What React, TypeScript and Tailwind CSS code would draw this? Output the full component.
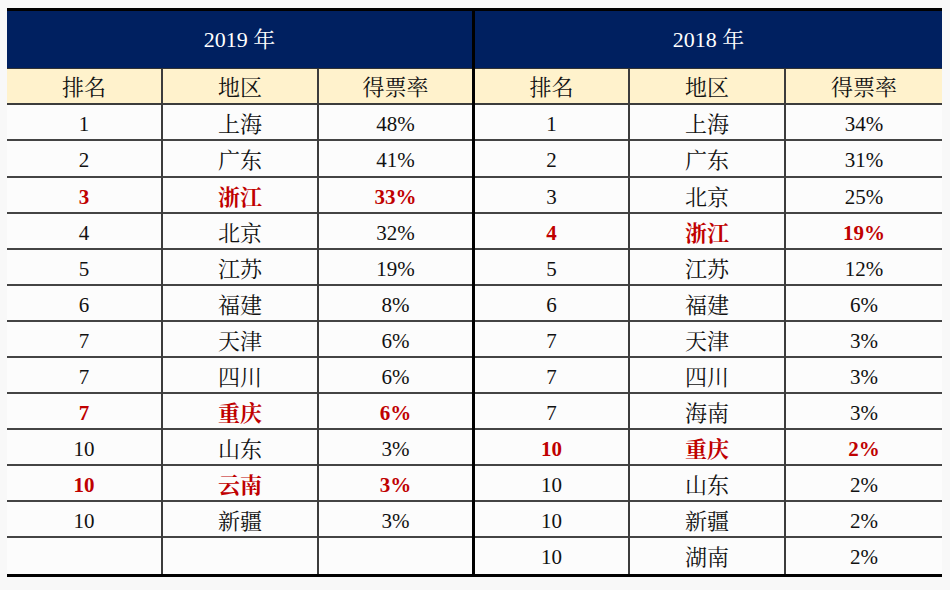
import React from 'react'

type Row = { rank: string; region: string; rate: string; hot?: boolean }

const data2019: Row[] = [
  { rank: '1', region: '上海', rate: '48%' },
  { rank: '2', region: '广东', rate: '41%' },
  { rank: '3', region: '浙江', rate: '33%', hot: true },
  { rank: '4', region: '北京', rate: '32%' },
  { rank: '5', region: '江苏', rate: '19%' },
  { rank: '6', region: '福建', rate: '8%' },
  { rank: '7', region: '天津', rate: '6%' },
  { rank: '7', region: '四川', rate: '6%' },
  { rank: '7', region: '重庆', rate: '6%', hot: true },
  { rank: '10', region: '山东', rate: '3%' },
  { rank: '10', region: '云南', rate: '3%', hot: true },
  { rank: '10', region: '新疆', rate: '3%' },
  { rank: '', region: '', rate: '' },
]

const data2018: Row[] = [
  { rank: '1', region: '上海', rate: '34%' },
  { rank: '2', region: '广东', rate: '31%' },
  { rank: '3', region: '北京', rate: '25%' },
  { rank: '4', region: '浙江', rate: '19%', hot: true },
  { rank: '5', region: '江苏', rate: '12%' },
  { rank: '6', region: '福建', rate: '6%' },
  { rank: '7', region: '天津', rate: '3%' },
  { rank: '7', region: '四川', rate: '3%' },
  { rank: '7', region: '海南', rate: '3%' },
  { rank: '10', region: '重庆', rate: '2%', hot: true },
  { rank: '10', region: '山东', rate: '2%' },
  { rank: '10', region: '新疆', rate: '2%' },
  { rank: '10', region: '湖南', rate: '2%' },
]

function YearTable({ year, rows, cols }: { year: string; rows: Row[]; cols: string }) {
  return (
    <div className="flex flex-col">
      <div className="h-[58px] bg-[#002060] text-white text-[22px] flex items-center justify-center border-b border-[#333]">
        {year} 年
      </div>
      <div className={`grid ${cols} h-[36px] bg-[#fff2cc] border-b-2 border-[#3c3c3c] text-[22px] text-[#111]`}>
        <div className="flex items-center justify-center pt-[2px] border-r-2 border-[#3c3c3c]">排名</div>
        <div className="flex items-center justify-center pt-[2px] border-r-2 border-[#3c3c3c]">地区</div>
        <div className="flex items-center justify-center pt-[2px]">得票率</div>
      </div>
      {rows.map((r, i) => (
        <div
          key={i}
          className={`grid ${cols} ${i === 1 ? 'h-[37px]' : 'h-[36px]'} ${
            i < rows.length - 1 ? 'border-b-2 border-[#444]' : ''
          } ${r.hot ? 'text-[#c00000] font-bold' : 'text-[#111]'} text-[21px]`}
        >
          <div className="flex items-center justify-center pt-[3px] border-r-2 border-[#3c3c3c]">{r.rank}</div>
          <div className="flex items-center justify-center pt-[3px] border-r-2 border-[#3c3c3c] text-[22px]">{r.region}</div>
          <div className="flex items-center justify-center pt-[3px]">{r.rate}</div>
        </div>
      ))}
    </div>
  )
}

export default function App() {
  return (
    <div className="w-[950px] h-[590px] bg-[#f8f8f8] pt-[8px] pl-[7px] font-['Liberation_Serif','Noto_Serif_CJK_SC','Noto_Sans_CJK_SC',serif]">
      <div className="w-[935px] flex border-t-[3px] border-b-[3px] border-black bg-[#fcfcfc]">
        <div className="w-[465px]">
          <YearTable year="2019" rows={data2019} cols="grid-cols-[156px_156px_1fr]" />
        </div>
        <div className="w-[3px] bg-black" />
        <div className="flex-1">
          <YearTable year="2018" rows={data2018} cols="grid-cols-[155px_156px_1fr]" />
        </div>
      </div>
    </div>
  )
}
